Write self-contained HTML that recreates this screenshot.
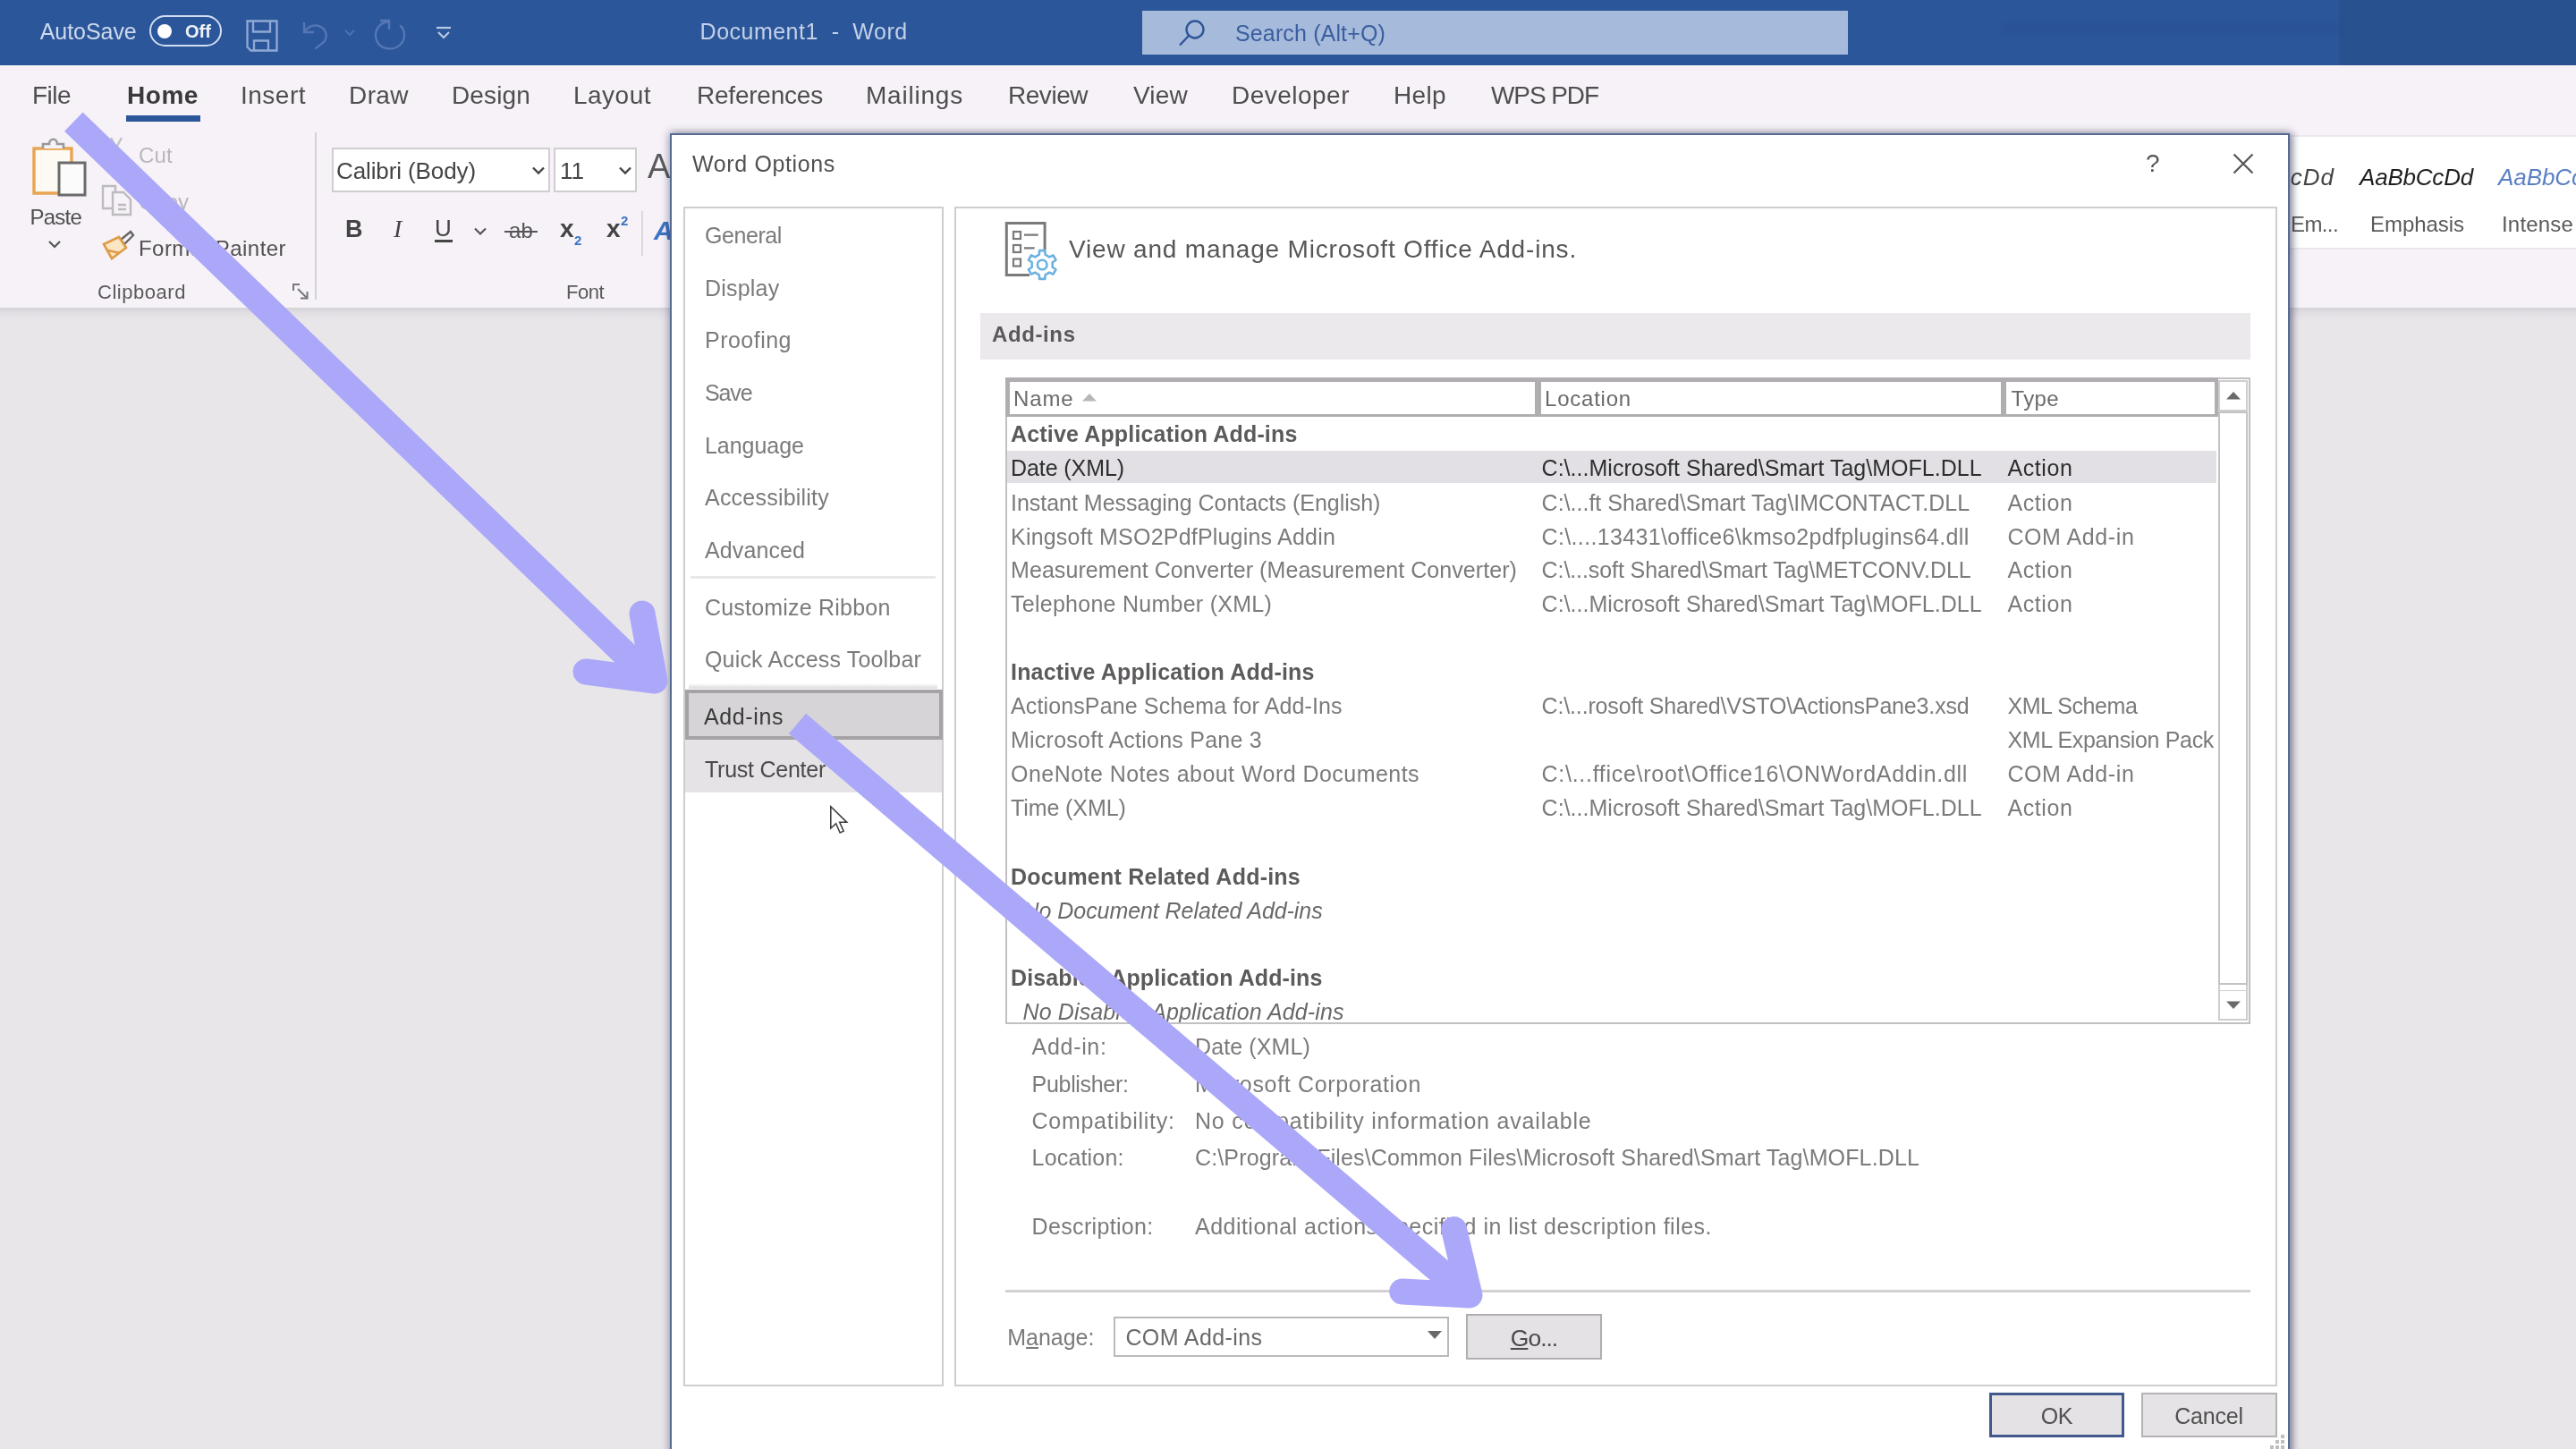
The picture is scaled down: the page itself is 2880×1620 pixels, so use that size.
<!DOCTYPE html>
<html lang="en"><head><meta charset="utf-8"><title>Word Options</title>
<style>
html,body{margin:0;padding:0;overflow:hidden;}
html{width:2880px;height:1620px;}
body{width:2880px;height:1620px;overflow:hidden;position:relative;background:#e9e6ea;font-family:"Liberation Sans", sans-serif;}
div,span.t,svg.a{position:absolute;}
span.t{white-space:pre;}
</style></head>
<body>
<div id="root" style="left:0;top:0;width:2880px;height:1620px;overflow:hidden;will-change:transform;">
<div style="left:0px;top:0px;width:2880px;height:73px;background:#2b579a;"></div>
<div style="left:2615px;top:0px;width:265px;height:73px;background:#28518f;"></div>
<div style="left:2240px;top:28px;width:375px;height:8px;background:rgba(30,60,120,.22);filter:blur(3px);"></div>
<div style="left:0px;top:73px;width:2880px;height:271px;background:#f6f2f8;"></div>
<div style="left:0px;top:344px;width:2880px;height:14px;background:linear-gradient(180deg,#d6d3d8 0%,#e2dfe4 45%,#e9e6ea 100%);"></div>
<div style="left:167px;top:17px;width:81px;height:35px;border:2.5px solid #d3ddf0;box-sizing:border-box;border-radius:18px;"></div>
<div style="left:176px;top:27px;width:16px;height:16px;background:#ffffff;border-radius:50%;"></div>
<svg class="a" style="left:273px;top:20px" width="40" height="40" viewBox="0 0 40 40" fill="none" stroke="#90a9d5" stroke-width="2.3"><path d="M3.5 3.5h33v33h-29l-4-4z"/><path d="M10 3.5v12h19v-12"/><path d="M11 36.5v-11h16v11"/></svg>
<svg class="a" style="left:336px;top:22px" width="36" height="36" viewBox="0 0 36 36" fill="none" stroke="#5577b5" stroke-width="2.3"><path d="M4 3v11h11"/><path d="M4.5 13.5c4-7 13-9 19-5s7 12 2 17l-9 7"/></svg>
<svg class="a" style="left:384px;top:32px" width="14" height="10" viewBox="0 0 14 10" fill="none" stroke="#4f71ae" stroke-width="2"><path d="M2 2l5 5 5-5"/></svg>
<svg class="a" style="left:416px;top:20px" width="40" height="38" viewBox="0 0 40 38" fill="none" stroke="#5577b5" stroke-width="2.3"><path d="M9 3h10v10"/><path d="M18 4.5c-7 0-14 6-14 15s7 15 16 15 16-7 16-15c0-5-2-9-5-11"/></svg>
<svg class="a" style="left:486px;top:29px" width="20" height="16" viewBox="0 0 20 16" fill="none" stroke="#b9c8e3" stroke-width="2.2"><path d="M2 2h16"/><path d="M4 7l6 6 6-6"/></svg>
<div style="left:1277px;top:12px;width:789px;height:49px;background:#a6badb;"></div>
<svg class="a" style="left:1316px;top:20px" width="34" height="34" viewBox="0 0 34 34" fill="none" stroke="#2f5596" stroke-width="2.4"><circle cx="20" cy="13" r="9.5"/><path d="M13 20L3 30.5"/></svg>
<div style="left:141px;top:129px;width:83px;height:7px;background:#2b579a;"></div>
<svg class="a" style="left:34px;top:152px" width="66" height="70" viewBox="0 0 66 70" fill="none"><path d="M4 14h42v50H4z" fill="#fdf9f3" stroke="#e8a550" stroke-width="3.4"/><path d="M14 14v-5h7c0-7 9-7 9 0h7v5" fill="#f6f2f8" stroke="#9a9a9a" stroke-width="2.6"/><rect x="32" y="30" width="29" height="36" fill="#fbfbfb" stroke="#6b6b6b" stroke-width="3"/></svg>
<svg class="a" style="left:52px;top:267px" width="18" height="12" viewBox="0 0 18 12" fill="none" stroke="#555" stroke-width="2.2"><path d="M3 3l6 6 6-6"/></svg>
<svg class="a" style="left:118px;top:152px" width="26" height="30" viewBox="0 0 26 30" fill="none" stroke="#c4c2c4" stroke-width="2.4"><path d="M18 2L6 24"/><path d="M6 2l12 22"/></svg>
<svg class="a" style="left:112px;top:205px" width="38" height="38" viewBox="0 0 38 38" fill="none" stroke="#bdbbbd" stroke-width="2.4"><path d="M3 3h14v25H3z"/><path d="M14 10h12l8 8v17H14z" fill="#f6f2f8"/><path d="M20 24h9M20 29h9"/></svg>
<svg class="a" style="left:113px;top:256px" width="38" height="36" viewBox="0 0 38 36" fill="none"><path d="M22 12l11-9 3 4-10 10z" fill="#f6f2f8" stroke="#666" stroke-width="2.4"/><path d="M3 17l17-8 8 12-16 12z" fill="#fbe6c4" stroke="#e09a45" stroke-width="2.6"/><path d="M8 24l13 3" stroke="#e09a45" stroke-width="2.4"/></svg>
<svg class="a" style="left:326px;top:316px" width="20" height="20" viewBox="0 0 20 20" fill="none" stroke="#777" stroke-width="2"><path d="M2 9V2h7"/><path d="M7 7l10 10"/><path d="M10 17.5h7.5V10"/></svg>
<div style="left:352px;top:148px;width:2px;height:187px;background:#d4d2d4;"></div>
<div style="left:371px;top:165px;width:244px;height:50px;background:#ffffff;border:2px solid #d0ced0;box-sizing:border-box;"></div>
<div style="left:619px;top:165px;width:93px;height:50px;background:#ffffff;border:2px solid #d0ced0;box-sizing:border-box;"></div>
<svg class="a" style="left:594px;top:185px" width="16" height="12" viewBox="0 0 16 12" fill="none" stroke="#444" stroke-width="2.4"><path d="M2 2.5l6 6 6-6"/></svg>
<svg class="a" style="left:691px;top:185px" width="16" height="12" viewBox="0 0 16 12" fill="none" stroke="#444" stroke-width="2.4"><path d="M2 2.5l6 6 6-6"/></svg>
<div style="left:486px;top:268px;width:20px;height:2.5px;background:#444;"></div>
<svg class="a" style="left:529px;top:253px" width="16" height="12" viewBox="0 0 16 12" fill="none" stroke="#555" stroke-width="2.2"><path d="M2 2.5l6 6 6-6"/></svg>
<div style="left:564px;top:258px;width:37px;height:2.2px;background:#555;"></div>
<div style="left:717px;top:236px;width:2px;height:50px;background:#dad8da;"></div>
<div style="left:2550px;top:151px;width:340px;height:128px;background:#ffffff;border:2px solid #ebe8ec;box-sizing:border-box;"></div>
<span class="t" style="left:44.7px;top:22.84px;font-size:25px;line-height:25px;color:#cdd8ec;letter-spacing:-0.053px;">AutoSave</span>
<span class="t" style="left:207px;top:25.07px;font-size:20px;line-height:20px;color:#eef2f9;font-weight:bold;letter-spacing:0.036px;">Off</span>
<span class="t" style="left:782.6px;top:22.84px;font-size:25px;line-height:25px;color:#c3d0e8;letter-spacing:0.487px;">Document1  -  Word</span>
<span class="t" style="left:1381px;top:24.84px;font-size:25px;line-height:25px;color:#3a5e9e;letter-spacing:0.141px;">Search (Alt+Q)</span>
<span class="t" style="left:36px;top:93.30px;font-size:28px;line-height:28px;color:#4e4e4e;letter-spacing:-0.531px;">File</span>
<span class="t" style="left:142px;top:93.30px;font-size:28px;line-height:28px;color:#3a3a3a;font-weight:bold;letter-spacing:0.551px;">Home</span>
<span class="t" style="left:269px;top:93.30px;font-size:28px;line-height:28px;color:#4e4e4e;letter-spacing:0.495px;">Insert</span>
<span class="t" style="left:390px;top:93.30px;font-size:28px;line-height:28px;color:#4e4e4e;letter-spacing:0.414px;">Draw</span>
<span class="t" style="left:505px;top:93.30px;font-size:28px;line-height:28px;color:#4e4e4e;letter-spacing:0.138px;">Design</span>
<span class="t" style="left:641px;top:93.30px;font-size:28px;line-height:28px;color:#4e4e4e;letter-spacing:0.487px;">Layout</span>
<span class="t" style="left:779px;top:93.30px;font-size:28px;line-height:28px;color:#4e4e4e;letter-spacing:-0.219px;">References</span>
<span class="t" style="left:968px;top:93.30px;font-size:28px;line-height:28px;color:#4e4e4e;letter-spacing:0.787px;">Mailings</span>
<span class="t" style="left:1127px;top:93.30px;font-size:28px;line-height:28px;color:#4e4e4e;letter-spacing:-0.469px;">Review</span>
<span class="t" style="left:1267px;top:93.30px;font-size:28px;line-height:28px;color:#4e4e4e;letter-spacing:0.203px;">View</span>
<span class="t" style="left:1377px;top:93.30px;font-size:28px;line-height:28px;color:#4e4e4e;letter-spacing:0.484px;">Developer</span>
<span class="t" style="left:1558px;top:93.30px;font-size:28px;line-height:28px;color:#4e4e4e;letter-spacing:0.352px;">Help</span>
<span class="t" style="left:1667px;top:93.30px;font-size:28px;line-height:28px;color:#4e4e4e;letter-spacing:-1.080px;">WPS PDF</span>
<span class="t" style="left:33.5px;top:230.68px;font-size:24px;line-height:24px;color:#505050;letter-spacing:-0.775px;">Paste</span>
<span class="t" style="left:155px;top:161.68px;font-size:24px;line-height:24px;color:#b9b7b9;letter-spacing:0.214px;">Cut</span>
<span class="t" style="left:155px;top:213.68px;font-size:24px;line-height:24px;color:#b9b7b9;letter-spacing:-0.008px;">Copy</span>
<span class="t" style="left:155px;top:265.68px;font-size:24px;line-height:24px;color:#505050;letter-spacing:0.449px;">Format Painter</span>
<span class="t" style="left:109px;top:316.38px;font-size:22px;line-height:22px;color:#5a5a5a;letter-spacing:0.536px;">Clipboard</span>
<span class="t" style="left:376px;top:177.99px;font-size:26px;line-height:26px;color:#444;letter-spacing:-0.107px;">Calibri (Body)</span>
<span class="t" style="left:626px;top:177.99px;font-size:26px;line-height:26px;color:#444;">11</span>
<span class="t" style="left:724px;top:166.83px;font-size:38px;line-height:38px;color:#5a5a5a;">A</span>
<span class="t" style="left:386px;top:243.14px;font-size:27px;line-height:27px;color:#444;font-weight:bold;">B</span>
<span class="t" style="left:440px;top:242.30px;font-size:28px;line-height:28px;color:#444;font-style:italic;font-family:'Liberation Serif',serif;">I</span>
<span class="t" style="left:486px;top:241.99px;font-size:26px;line-height:26px;color:#444;letter-spacing:1.219px;">U</span>
<span class="t" style="left:569px;top:245.68px;font-size:24px;line-height:24px;color:#555;letter-spacing:0.148px;">ab</span>
<span class="t" style="left:626px;top:242.30px;font-size:28px;line-height:28px;color:#444;font-weight:bold;letter-spacing:-0.578px;">x</span>
<span class="t" style="left:642px;top:261.30px;font-size:15px;line-height:15px;color:#3d74c4;font-weight:bold;">2</span>
<span class="t" style="left:678px;top:242.30px;font-size:28px;line-height:28px;color:#444;font-weight:bold;letter-spacing:-0.578px;">x</span>
<span class="t" style="left:694px;top:239.30px;font-size:15px;line-height:15px;color:#3d74c4;font-weight:bold;">2</span>
<span class="t" style="left:731px;top:242.60px;font-size:30px;line-height:30px;color:#3d74c4;font-weight:bold;font-style:italic;">A</span>
<span class="t" style="left:633px;top:316.38px;font-size:22px;line-height:22px;color:#5a5a5a;letter-spacing:-0.508px;">Font</span>
<span class="t" style="left:2541px;top:184.99px;font-size:26px;line-height:26px;color:#444;font-style:italic;letter-spacing:0.996px;">CcDd</span>
<span class="t" style="left:2638px;top:184.99px;font-size:26px;line-height:26px;color:#1f1f1f;font-style:italic;letter-spacing:-0.203px;">AaBbCcDd</span>
<span class="t" style="left:2793px;top:184.99px;font-size:26px;line-height:26px;color:#5b7fc4;font-style:italic;letter-spacing:-0.065px;">AaBbCc</span>
<span class="t" style="left:2561px;top:238.68px;font-size:24px;line-height:24px;color:#5a5a5a;letter-spacing:-0.603px;">Em...</span>
<span class="t" style="left:2650px;top:238.68px;font-size:24px;line-height:24px;color:#5a5a5a;letter-spacing:-0.047px;">Emphasis</span>
<span class="t" style="left:2797px;top:238.68px;font-size:24px;line-height:24px;color:#5a5a5a;letter-spacing:0.181px;">Intense</span>
<div style="left:749px;top:149px;width:1811px;height:1500px;background:#ffffff;border:2px solid #566b94;box-sizing:border-box;box-shadow:0 0 9px 1px rgba(40,40,70,.42),4px 1px 7px rgba(50,50,90,.30);"></div>
<svg class="a" style="left:2495px;top:170px" width="26" height="26" viewBox="0 0 26 26" fill="none" stroke="#555" stroke-width="2.2"><path d="M2.5 2.5l21 21M23.5 2.5l-21 21"/></svg>
<div style="left:764px;top:231px;width:291px;height:1318.5px;background:#fff;border:2px solid #cfcdcf;box-sizing:border-box;"></div>
<div style="left:1067px;top:231px;width:1479px;height:1318.5px;background:#fff;border:2px solid #cfcdcf;box-sizing:border-box;"></div>
<div style="left:772px;top:644px;width:274px;height:3px;background:#e9e7e9;"></div>
<div style="left:770px;top:764px;width:278px;height:6px;background:linear-gradient(180deg,rgba(225,223,225,0),rgba(215,213,215,.9));"></div>
<div style="left:765.5px;top:770.5px;width:288px;height:56px;background:#d6d4d6;border:4px solid #a5a3a5;box-sizing:border-box;"></div>
<div style="left:766px;top:827px;width:287px;height:59px;background:#e6e3e7;"></div>
<svg class="a" style="left:1120px;top:244px" width="68" height="74" viewBox="0 0 68 74" fill="none"><path d="M31 63.4H5.3V5.6h42.8V35" stroke="#7b797b" stroke-width="3"/><g stroke="#7b797b" stroke-width="2.2"><rect x="13" y="15" width="8" height="8"/><rect x="13" y="30" width="8" height="8"/><rect x="13" y="45.5" width="8" height="8"/><path d="M25 18.6h15.7M25 33.3h11.6"/></g><g stroke="#6db1e1" stroke-width="2.6" fill="#fff" stroke-linejoin="round"><path d="M56.7 49.3L60.5 46.7L57.4 41.4L53.2 43.4L48.6 40.7L48.3 36.1L42.1 36.1L41.8 40.7L37.2 43.4L33.0 41.4L29.9 46.7L33.7 49.3L33.7 54.7L29.9 57.3L33.0 62.6L37.2 60.6L41.8 63.3L42.1 67.9L48.3 67.9L48.6 63.3L53.2 60.6L57.4 62.6L60.5 57.3L56.7 54.7z"/><circle cx="45.2" cy="52" r="5.3"/></g></svg>
<div style="left:1096px;top:349.5px;width:1420px;height:52.5px;background:#ebe9eb;"></div>
<div style="left:1124px;top:422px;width:1392px;height:722.5px;background:#fff;border:2px solid #c2c0c2;box-sizing:border-box;"></div>
<div style="left:1124px;top:422px;width:1356px;height:44px;background:#b0aeb0;"></div>
<div style="left:1129px;top:427px;width:587px;height:36px;background:#fff;"></div>
<div style="left:1723px;top:427px;width:514px;height:36px;background:#fff;"></div>
<div style="left:2243px;top:427px;width:233px;height:36px;background:#fff;"></div>
<div style="left:2480px;top:425px;width:33px;height:716px;background:#fff;border:2px solid #cfcdcf;box-sizing:border-box;"></div>
<div style="left:2480px;top:425px;width:33px;height:35px;background:#fff;border:2px solid #cfcdcf;box-sizing:border-box;"></div>
<div style="left:2480px;top:1106px;width:33px;height:35px;background:#fff;border:2px solid #cfcdcf;box-sizing:border-box;"></div>
<div style="left:2482px;top:1100px;width:29px;height:7px;background:#fff;"></div>
<div style="left:2480px;top:460px;width:33px;height:641px;background:#fff;border:2px solid #c4c2c4;box-sizing:border-box;"></div>
<div style="left:1126px;top:503.5px;width:1352px;height:36.5px;background:#e2e0e4;"></div>
<div style="left:1124px;top:1442px;width:1392px;height:3px;background:#d3d1d3;"></div>
<div style="left:1245px;top:1471.5px;width:375px;height:45px;background:#fff;border:2px solid #bbb9bb;box-sizing:border-box;"></div>
<div style="left:1639px;top:1468.5px;width:152px;height:51px;background:#e4e2e4;border:2px solid #b0aeb0;box-sizing:border-box;"></div>
<div style="left:2224px;top:1557px;width:151px;height:50px;background:#e4e2e4;border:3px solid #41598c;box-sizing:border-box;"></div>
<div style="left:2394px;top:1557px;width:152px;height:50px;background:#e5e3e5;border:2px solid #b4b2b4;box-sizing:border-box;"></div>
<svg class="a" style="left:1209px;top:439px" width="18" height="10" viewBox="0 0 18 10"><path d="M1 9.5L9 1l8 8.5z" fill="#b9b7b9"/></svg>
<svg class="a" style="left:2487.5px;top:437px" width="18" height="10" viewBox="0 0 18 10"><path d="M1 9.5L9 1l8 8.5z" fill="#6a6a6a"/></svg>
<svg class="a" style="left:2487.5px;top:1119px" width="18" height="10" viewBox="0 0 18 10"><path d="M1 .5L9 9l8-8.5z" fill="#6a6a6a"/></svg>
<svg class="a" style="left:1595px;top:1487px" width="18" height="11" viewBox="0 0 18 11"><path d="M1 1h16L9 10z" fill="#6a686a"/></svg>
<svg class="a" style="left:2536px;top:1602px" width="20" height="22" viewBox="0 0 20 22" fill="#c0bec0"><rect x="14" y="2" width="4" height="4"/><rect x="8" y="8" width="4" height="4"/><rect x="14" y="8" width="4" height="4"/><rect x="2" y="14" width="4" height="4"/><rect x="8" y="14" width="4" height="4"/><rect x="14" y="14" width="4" height="4"/></svg>
<span class="t" style="left:774px;top:171.24px;font-size:25px;line-height:25px;color:#505050;letter-spacing:0.634px;">Word Options</span>
<span class="t" style="left:2399px;top:169.30px;font-size:28px;line-height:28px;color:#555;">?</span>
<span class="t" style="left:788px;top:250.84px;font-size:25px;line-height:25px;color:#7c7a7c;letter-spacing:-0.422px;">General</span>
<span class="t" style="left:788px;top:309.84px;font-size:25px;line-height:25px;color:#7c7a7c;letter-spacing:0.202px;">Display</span>
<span class="t" style="left:788px;top:367.84px;font-size:25px;line-height:25px;color:#7c7a7c;letter-spacing:0.484px;">Proofing</span>
<span class="t" style="left:788px;top:426.84px;font-size:25px;line-height:25px;color:#7c7a7c;letter-spacing:-1.146px;">Save</span>
<span class="t" style="left:788px;top:485.84px;font-size:25px;line-height:25px;color:#7c7a7c;letter-spacing:-0.029px;">Language</span>
<span class="t" style="left:788px;top:544.34px;font-size:25px;line-height:25px;color:#7c7a7c;letter-spacing:0.219px;">Accessibility</span>
<span class="t" style="left:788px;top:602.84px;font-size:25px;line-height:25px;color:#7c7a7c;letter-spacing:0.100px;">Advanced</span>
<span class="t" style="left:788px;top:666.84px;font-size:25px;line-height:25px;color:#7c7a7c;letter-spacing:0.202px;">Customize Ribbon</span>
<span class="t" style="left:788px;top:725.44px;font-size:25px;line-height:25px;color:#7c7a7c;letter-spacing:0.173px;">Quick Access Toolbar</span>
<span class="t" style="left:787px;top:788.84px;font-size:25px;line-height:25px;color:#3a3a3a;letter-spacing:0.605px;">Add-ins</span>
<span class="t" style="left:788px;top:848.34px;font-size:25px;line-height:25px;color:#4a4a4a;letter-spacing:-0.251px;">Trust Center</span>
<span class="t" style="left:1195px;top:264.70px;font-size:28px;line-height:28px;color:#585658;letter-spacing:0.821px;">View and manage Microsoft Office Add-ins.</span>
<span class="t" style="left:1109px;top:362.38px;font-size:24px;line-height:24px;color:#5a585a;font-weight:bold;letter-spacing:0.610px;">Add-ins</span>
<span class="t" style="left:1133px;top:433.68px;font-size:24px;line-height:24px;color:#6a6a6a;letter-spacing:0.892px;">Name</span>
<span class="t" style="left:1727px;top:433.68px;font-size:24px;line-height:24px;color:#6a6a6a;letter-spacing:0.781px;">Location</span>
<span class="t" style="left:2248.6px;top:433.68px;font-size:24px;line-height:24px;color:#6a6a6a;letter-spacing:0.342px;">Type</span>
<span class="t" style="left:1130px;top:473.24px;font-size:25px;line-height:25px;color:#5c5a5c;font-weight:bold;letter-spacing:0.164px;">Active Application Add-ins</span>
<span class="t" style="left:1130px;top:511.24px;font-size:25px;line-height:25px;color:#2e2e2e;letter-spacing:-0.081px;">Date (XML)</span>
<span class="t" style="left:1723.6px;top:511.24px;font-size:25px;line-height:25px;color:#2e2e2e;letter-spacing:0.015px;">C:\...Microsoft Shared\Smart Tag\MOFL.DLL</span>
<span class="t" style="left:2244.4px;top:511.24px;font-size:25px;line-height:25px;color:#2e2e2e;letter-spacing:0.586px;">Action</span>
<span class="t" style="left:1130px;top:549.64px;font-size:25px;line-height:25px;color:#7c7a7c;letter-spacing:-0.019px;">Instant Messaging Contacts (English)</span>
<span class="t" style="left:1723.6px;top:549.64px;font-size:25px;line-height:25px;color:#7c7a7c;letter-spacing:0.005px;">C:\...ft Shared\Smart Tag\IMCONTACT.DLL</span>
<span class="t" style="left:2244.4px;top:549.64px;font-size:25px;line-height:25px;color:#7c7a7c;letter-spacing:0.586px;">Action</span>
<span class="t" style="left:1130px;top:587.64px;font-size:25px;line-height:25px;color:#7c7a7c;letter-spacing:0.202px;">Kingsoft MSO2PdfPlugins Addin</span>
<span class="t" style="left:1723.6px;top:587.64px;font-size:25px;line-height:25px;color:#7c7a7c;letter-spacing:0.340px;">C:\....13431\office6\kmso2pdfplugins64.dll</span>
<span class="t" style="left:2244.4px;top:587.64px;font-size:25px;line-height:25px;color:#7c7a7c;letter-spacing:0.583px;">COM Add-in</span>
<span class="t" style="left:1130px;top:625.34px;font-size:25px;line-height:25px;color:#7c7a7c;letter-spacing:0.073px;">Measurement Converter (Measurement Converter)</span>
<span class="t" style="left:1723.6px;top:625.34px;font-size:25px;line-height:25px;color:#7c7a7c;letter-spacing:-0.091px;">C:\...soft Shared\Smart Tag\METCONV.DLL</span>
<span class="t" style="left:2244.4px;top:625.34px;font-size:25px;line-height:25px;color:#7c7a7c;letter-spacing:0.586px;">Action</span>
<span class="t" style="left:1130px;top:662.64px;font-size:25px;line-height:25px;color:#7c7a7c;letter-spacing:0.261px;">Telephone Number (XML)</span>
<span class="t" style="left:1723.6px;top:662.64px;font-size:25px;line-height:25px;color:#7c7a7c;letter-spacing:0.015px;">C:\...Microsoft Shared\Smart Tag\MOFL.DLL</span>
<span class="t" style="left:2244.4px;top:662.64px;font-size:25px;line-height:25px;color:#7c7a7c;letter-spacing:0.586px;">Action</span>
<span class="t" style="left:1130px;top:739.14px;font-size:25px;line-height:25px;color:#5c5a5c;font-weight:bold;letter-spacing:0.189px;">Inactive Application Add-ins</span>
<span class="t" style="left:1130px;top:776.64px;font-size:25px;line-height:25px;color:#7c7a7c;letter-spacing:0.127px;">ActionsPane Schema for Add-Ins</span>
<span class="t" style="left:1723.6px;top:776.64px;font-size:25px;line-height:25px;color:#7c7a7c;letter-spacing:-0.159px;">C:\...rosoft Shared\VSTO\ActionsPane3.xsd</span>
<span class="t" style="left:2244.4px;top:776.64px;font-size:25px;line-height:25px;color:#7c7a7c;letter-spacing:-0.414px;">XML Schema</span>
<span class="t" style="left:1130px;top:814.64px;font-size:25px;line-height:25px;color:#7c7a7c;letter-spacing:0.244px;">Microsoft Actions Pane 3</span>
<span class="t" style="left:2244.4px;top:814.64px;font-size:25px;line-height:25px;color:#7c7a7c;letter-spacing:-0.339px;">XML Expansion Pack</span>
<span class="t" style="left:1130px;top:852.64px;font-size:25px;line-height:25px;color:#7c7a7c;letter-spacing:0.458px;">OneNote Notes about Word Documents</span>
<span class="t" style="left:1723.6px;top:852.64px;font-size:25px;line-height:25px;color:#7c7a7c;letter-spacing:0.709px;">C:\...ffice\root\Office16\ONWordAddin.dll</span>
<span class="t" style="left:2244.4px;top:852.64px;font-size:25px;line-height:25px;color:#7c7a7c;letter-spacing:0.583px;">COM Add-in</span>
<span class="t" style="left:1130px;top:890.64px;font-size:25px;line-height:25px;color:#7c7a7c;letter-spacing:-0.094px;">Time (XML)</span>
<span class="t" style="left:1723.6px;top:890.64px;font-size:25px;line-height:25px;color:#7c7a7c;letter-spacing:0.015px;">C:\...Microsoft Shared\Smart Tag\MOFL.DLL</span>
<span class="t" style="left:2244.4px;top:890.64px;font-size:25px;line-height:25px;color:#7c7a7c;letter-spacing:0.586px;">Action</span>
<span class="t" style="left:1130px;top:967.64px;font-size:25px;line-height:25px;color:#5c5a5c;font-weight:bold;letter-spacing:0.227px;">Document Related Add-ins</span>
<span class="t" style="left:1143.6px;top:1005.64px;font-size:25px;line-height:25px;color:#6a686a;font-style:italic;letter-spacing:-0.065px;">No Document Related Add-ins</span>
<span class="t" style="left:1130px;top:1080.64px;font-size:25px;line-height:25px;color:#5c5a5c;font-weight:bold;letter-spacing:0.111px;">Disabled Application Add-ins</span>
<span class="t" style="left:1143.6px;top:1118.64px;font-size:25px;line-height:25px;color:#6a686a;font-style:italic;letter-spacing:0.119px;">No Disabled Application Add-ins</span>
<span class="t" style="left:1126.3px;top:1482.84px;font-size:25px;line-height:25px;color:#7c7a7c;letter-spacing:-0.042px;">M<u>a</u>nage:</span>
<span class="t" style="left:1258.4px;top:1482.84px;font-size:25px;line-height:25px;color:#6a686a;letter-spacing:0.393px;">COM Add-ins</span>
<span class="t" style="left:1715px;top:1482.57px;font-size:26.5px;line-height:26.5px;color:#4a4a4a;transform:translateX(-50%);letter-spacing:-1px;"><u>G</u>o...</span>
<span class="t" style="left:2299.3px;top:1570.84px;font-size:25px;line-height:25px;color:#505050;transform:translateX(-50%);letter-spacing:-.6px;">OK</span>
<span class="t" style="left:2469.5px;top:1570.84px;font-size:25px;line-height:25px;color:#505050;transform:translateX(-50%);letter-spacing:-.2px;">Cancel</span>
<div style="left:1124px;top:1142.5px;width:1392px;height:2px;background:#c2c0c2;"></div>
<div style="left:1120px;top:1144.5px;width:1400px;height:9px;background:#fff;"></div>
<span class="t" style="left:1153.6px;top:1158.24px;font-size:25px;line-height:25px;color:#7c7a7c;letter-spacing:0.683px;">Add-in:</span>
<span class="t" style="left:1336px;top:1158.24px;font-size:25px;line-height:25px;color:#7c7a7c;letter-spacing:0.119px;">Date (XML)</span>
<span class="t" style="left:1153.6px;top:1200.14px;font-size:25px;line-height:25px;color:#7c7a7c;letter-spacing:-0.317px;">Publisher:</span>
<span class="t" style="left:1336px;top:1200.14px;font-size:25px;line-height:25px;color:#7c7a7c;letter-spacing:0.667px;">Microsoft Corporation</span>
<span class="t" style="left:1153.6px;top:1241.14px;font-size:25px;line-height:25px;color:#7c7a7c;letter-spacing:0.710px;">Compatibility:</span>
<span class="t" style="left:1336px;top:1241.14px;font-size:25px;line-height:25px;color:#7c7a7c;letter-spacing:0.813px;">No compatibility information available</span>
<span class="t" style="left:1153.6px;top:1282.14px;font-size:25px;line-height:25px;color:#7c7a7c;letter-spacing:0.170px;">Location:</span>
<span class="t" style="left:1336px;top:1282.14px;font-size:25px;line-height:25px;color:#7c7a7c;letter-spacing:0.136px;">C:\Program Files\Common Files\Microsoft Shared\Smart Tag\MOFL.DLL</span>
<span class="t" style="left:1153.6px;top:1358.64px;font-size:25px;line-height:25px;color:#7c7a7c;letter-spacing:0.333px;">Description:</span>
<span class="t" style="left:1336px;top:1358.64px;font-size:25px;line-height:25px;color:#7c7a7c;letter-spacing:0.478px;">Additional actions specified in list description files.</span>
<svg class="a" style="left:0;top:0" width="2880" height="1620" viewBox="0 0 2880 1620" fill="none" stroke="#aca8f9" stroke-width="29">
<path d="M82.3 136.2L729.8 761" stroke-width="29.6"/><path d="M718 686L732 761L655 751" stroke-linecap="round" stroke-linejoin="round"/>
<path d="M891.5 809L1641.5 1448" stroke-width="29.6"/><path d="M1625.6 1374.5L1643 1448L1567.7 1444" stroke-linecap="round" stroke-linejoin="round"/>
</svg>
<svg class="a" style="left:926.5px;top:900px" width="23.4" height="34.2" viewBox="0 0 26 38"><path d="M2 2v27l6.5-6 5 11.5 4.5-2-5-11h9z" fill="#fff" stroke="#3c3c3c" stroke-width="1.7" stroke-linejoin="miter"/></svg>
</div>
</body></html>
